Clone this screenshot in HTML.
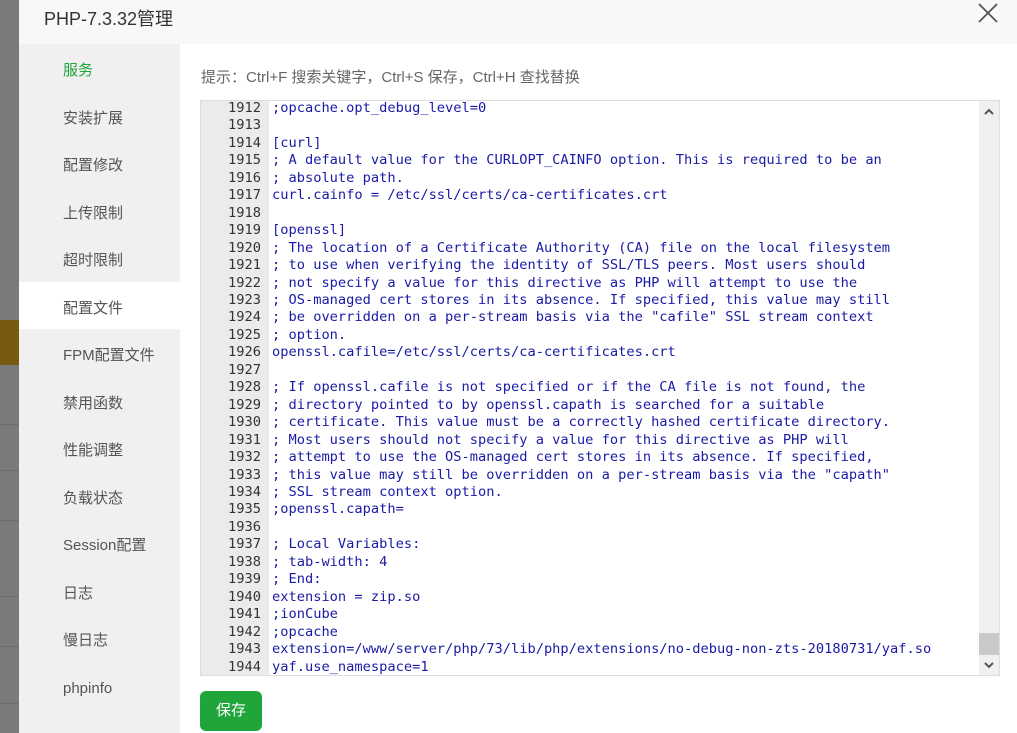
<!DOCTYPE html>
<html><head><meta charset="utf-8"><style>
*{margin:0;padding:0;box-sizing:border-box}
body{width:1017px;height:733px;overflow:hidden;background:#777;font-family:"Liberation Sans","Noto Sans CJK SC",sans-serif;position:relative}
.bg{position:absolute;left:0;top:0;width:19px;height:733px;background:#7a7a7a}
.modal{position:absolute;left:19px;top:0;width:998px;height:733px;background:#fff}
.hdr{height:44px;background:#f8f8f8;font-size:18px;color:#333;line-height:38px;padding-left:25px}
.close{position:absolute;right:18px;top:2px;width:22px;height:22px}
.side{position:absolute;left:0;top:44px;width:161px;height:689px;background:#f0f0f0}
.side div{height:47.5px;line-height:54px;padding-left:44px;font-size:15px;color:#555}
.side .on{background:#fff}
.side .g{color:#20a53a}
.tip{position:absolute;left:182px;top:66px;font-size:15px;color:#666}
.ed{position:absolute;left:181px;top:100px;width:800px;height:576px;border:1px solid #ddd;background:#fff;overflow:hidden}
.gut{position:absolute;left:0;top:0;width:68px;height:100%;background:#ebebeb}
.code{position:absolute;left:0;top:-1px;font-family:"DejaVu Sans Mono",monospace;font-size:13.7px;line-height:17.45px;white-space:pre;color:#1a1aa6}
.code .n{display:inline-block;width:60px;text-align:right;color:#333;margin-right:11px}
.sb{position:absolute;right:0;top:0;width:20px;height:100%;background:#f0f0f0}
.thumb{position:absolute;right:0;top:532px;width:20px;height:22px;background:#c9c9c9}
.btn{position:absolute;left:181px;top:691px;width:62px;height:40px;background:#20a53a;border-radius:6px;color:#fff;font-size:15px;text-align:center;line-height:40px}
</style></head><body>
<div class="bg">
<div style="position:absolute;top:320px;left:0;width:19px;height:45px;background:#7a5a10"></div>
<div style="position:absolute;top:424px;left:0;width:19px;border-top:1px solid #6c6c6c"></div>
<div style="position:absolute;top:470px;left:0;width:19px;border-top:1px solid #6c6c6c"></div>
<div style="position:absolute;top:520px;left:0;width:19px;border-top:1px solid #6c6c6c"></div>
<div style="position:absolute;top:596px;left:0;width:19px;border-top:1px solid #6c6c6c"></div>
<div style="position:absolute;top:646px;left:0;width:19px;border-top:1px solid #6c6c6c"></div>
<div style="position:absolute;top:703px;left:0;width:19px;border-top:1px solid #6c6c6c"></div>
</div>
<div class="modal">
<div class="hdr">PHP-7.3.32管理</div>
<svg class="close" viewBox="0 0 22 22"><path d="M2 2L20 20M20 2L2 20" stroke="#555" stroke-width="1.8"/></svg>
<div class="side">
<div class="g">服务</div><div>安装扩展</div><div>配置修改</div><div>上传限制</div><div>超时限制</div><div class="on">配置文件</div><div>FPM配置文件</div><div>禁用函数</div><div>性能调整</div><div>负载状态</div><div>Session配置</div><div>日志</div><div>慢日志</div><div>phpinfo</div>
</div>
<div class="tip">提示：Ctrl+F 搜索关键字，Ctrl+S 保存，Ctrl+H 查找替换</div>
<div class="ed"><div class="gut"></div>
<div class="code"><span class="n">1912</span>;opcache.opt_debug_level=0
<span class="n">1913</span>
<span class="n">1914</span>[curl]
<span class="n">1915</span>; A default value for the CURLOPT_CAINFO option. This is required to be an
<span class="n">1916</span>; absolute path.
<span class="n">1917</span>curl.cainfo = /etc/ssl/certs/ca-certificates.crt
<span class="n">1918</span>
<span class="n">1919</span>[openssl]
<span class="n">1920</span>; The location of a Certificate Authority (CA) file on the local filesystem
<span class="n">1921</span>; to use when verifying the identity of SSL/TLS peers. Most users should
<span class="n">1922</span>; not specify a value for this directive as PHP will attempt to use the
<span class="n">1923</span>; OS-managed cert stores in its absence. If specified, this value may still
<span class="n">1924</span>; be overridden on a per-stream basis via the "cafile" SSL stream context
<span class="n">1925</span>; option.
<span class="n">1926</span>openssl.cafile=/etc/ssl/certs/ca-certificates.crt
<span class="n">1927</span>
<span class="n">1928</span>; If openssl.cafile is not specified or if the CA file is not found, the
<span class="n">1929</span>; directory pointed to by openssl.capath is searched for a suitable
<span class="n">1930</span>; certificate. This value must be a correctly hashed certificate directory.
<span class="n">1931</span>; Most users should not specify a value for this directive as PHP will
<span class="n">1932</span>; attempt to use the OS-managed cert stores in its absence. If specified,
<span class="n">1933</span>; this value may still be overridden on a per-stream basis via the "capath"
<span class="n">1934</span>; SSL stream context option.
<span class="n">1935</span>;openssl.capath=
<span class="n">1936</span>
<span class="n">1937</span>; Local Variables:
<span class="n">1938</span>; tab-width: 4
<span class="n">1939</span>; End:
<span class="n">1940</span>extension = zip.so
<span class="n">1941</span>;ionCube
<span class="n">1942</span>;opcache
<span class="n">1943</span>extension=/www/server/php/73/lib/php/extensions/no-debug-non-zts-20180731/yaf.so
<span class="n">1944</span>yaf.use_namespace=1</div>
<div class="sb"><svg style="position:absolute;left:5px;top:7px" width="10" height="7" viewBox="0 0 10 7"><path d="M1 6L5 2L9 6" stroke="#555" stroke-width="2" fill="none"/></svg>
<div class="thumb"></div>
<svg style="position:absolute;left:5px;top:561px" width="10" height="7" viewBox="0 0 10 7"><path d="M1 1L5 5L9 1" stroke="#555" stroke-width="2" fill="none"/></svg></div>
</div>
<div class="btn">保存</div>
</div>
</body></html>
